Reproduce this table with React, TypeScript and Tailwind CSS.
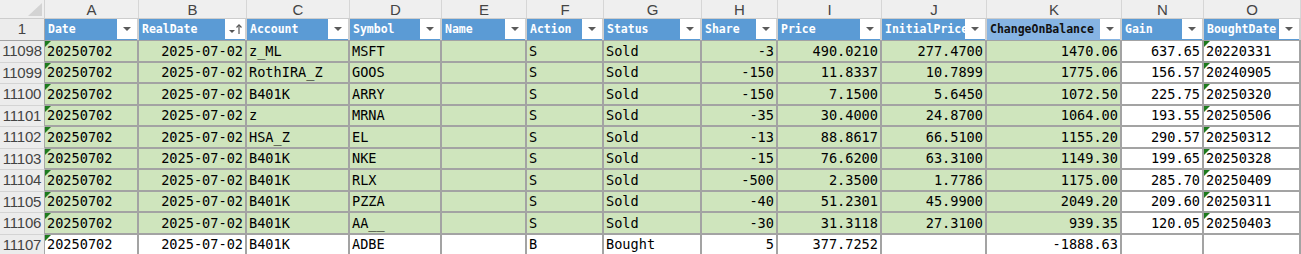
type Col = {
  letter: string
  w: string
  head: string
  align: 'left' | 'right'
  greenFill: boolean
  sorted?: boolean
  light?: boolean
}

const cols: Col[] = [
  { letter: 'A', w: 'w-[94px]', head: 'Date', align: 'left', greenFill: true },
  { letter: 'B', w: 'w-[108px]', head: 'RealDate', align: 'right', greenFill: true, sorted: true },
  { letter: 'C', w: 'w-[103px]', head: 'Account', align: 'left', greenFill: true },
  { letter: 'D', w: 'w-[92px]', head: 'Symbol', align: 'left', greenFill: true },
  { letter: 'E', w: 'w-[85px]', head: 'Name', align: 'left', greenFill: true },
  { letter: 'F', w: 'w-[77px]', head: 'Action', align: 'left', greenFill: true },
  { letter: 'G', w: 'w-[98px]', head: 'Status', align: 'left', greenFill: true },
  { letter: 'H', w: 'w-[76px]', head: 'Share', align: 'right', greenFill: true },
  { letter: 'I', w: 'w-[104px]', head: 'Price', align: 'right', greenFill: true },
  { letter: 'J', w: 'w-[105px]', head: 'InitialPrice', align: 'right', greenFill: true },
  { letter: 'K', w: 'w-[135px]', head: 'ChangeOnBalance', align: 'right', greenFill: true, light: true },
  { letter: 'N', w: 'w-[82px]', head: 'Gain', align: 'right', greenFill: false },
  { letter: 'O', w: 'w-[97px]', head: 'BoughtDate', align: 'left', greenFill: false },
]

const rows: { n: number; cells: string[]; sold: boolean }[] = [
  { n: 11098, sold: true, cells: ['20250702', '2025-07-02', 'z_ML', 'MSFT', '', 'S', 'Sold', '-3', '490.0210', '277.4700', '1470.06', '637.65', '20220331'] },
  { n: 11099, sold: true, cells: ['20250702', '2025-07-02', 'RothIRA_Z', 'GOOS', '', 'S', 'Sold', '-150', '11.8337', '10.7899', '1775.06', '156.57', '20240905'] },
  { n: 11100, sold: true, cells: ['20250702', '2025-07-02', 'B401K', 'ARRY', '', 'S', 'Sold', '-150', '7.1500', '5.6450', '1072.50', '225.75', '20250320'] },
  { n: 11101, sold: true, cells: ['20250702', '2025-07-02', 'z', 'MRNA', '', 'S', 'Sold', '-35', '30.4000', '24.8700', '1064.00', '193.55', '20250506'] },
  { n: 11102, sold: true, cells: ['20250702', '2025-07-02', 'HSA_Z', 'EL', '', 'S', 'Sold', '-13', '88.8617', '66.5100', '1155.20', '290.57', '20250312'] },
  { n: 11103, sold: true, cells: ['20250702', '2025-07-02', 'B401K', 'NKE', '', 'S', 'Sold', '-15', '76.6200', '63.3100', '1149.30', '199.65', '20250328'] },
  { n: 11104, sold: true, cells: ['20250702', '2025-07-02', 'B401K', 'RLX', '', 'S', 'Sold', '-500', '2.3500', '1.7786', '1175.00', '285.70', '20250409'] },
  { n: 11105, sold: true, cells: ['20250702', '2025-07-02', 'B401K', 'PZZA', '', 'S', 'Sold', '-40', '51.2301', '45.9900', '2049.20', '209.60', '20250311'] },
  { n: 11106, sold: true, cells: ['20250702', '2025-07-02', 'B401K', 'AA__', '', 'S', 'Sold', '-30', '31.3118', '27.3100', '939.35', '120.05', '20250403'] },
  { n: 11107, sold: false, cells: ['20250702', '2025-07-02', 'B401K', 'ADBE', '', 'B', 'Bought', '5', '377.7252', '', '-1888.63', '', ''] },
]

function FilterButton({ sorted }: { sorted?: boolean }) {
  return (
    <span className="absolute right-0 top-0 h-[20px] w-[20px] bg-white flex items-center justify-center">
      {sorted ? (
        <svg width="20" height="20" viewBox="0 0 20 20">
          <polygon points="4,11 10,11 7,14" fill="#555" />
          <line x1="14" y1="6" x2="14" y2="15" stroke="#555" strokeWidth="1.2" />
          <polyline points="11.5,8.5 14,5.8 16.5,8.5" fill="none" stroke="#555" strokeWidth="1.2" />
        </svg>
      ) : (
        <svg width="20" height="20" viewBox="0 0 20 20">
          <polygon points="6,8 14,8 10,12" fill="#5a5a5a" />
        </svg>
      )}
    </span>
  )
}

function ErrTri() {
  return (
    <svg className="absolute left-0 top-0" width="6" height="6" viewBox="0 0 6 6">
      <polygon points="0,0 6,0 0,6" fill="#1d7a1d" />
    </svg>
  )
}

export default function App() {
  return (
    <div className="w-[1301px] h-[254px] overflow-hidden bg-white select-none">
      {/* column letters */}
      <div className="flex h-[19px] bg-[#efefef] border-b border-[#cdcdcd] font-['Liberation_Sans',sans-serif] text-[15px] text-[#444]">
        <div className="w-[45px] relative border-r border-[#d2d2d2]">
          <svg className="absolute right-[2px] bottom-[2px]" width="14" height="13" viewBox="0 0 14 13">
            <polygon points="14,0 14,13 0,13" fill="#d3d3d3" />
          </svg>
        </div>
        {cols.map((c) => (
          <div key={c.letter} className={`${c.w} flex items-center justify-center border-r border-[#d6d6d6] leading-none`}>
            {c.letter}
          </div>
        ))}
      </div>

      {/* table header row */}
      <div className="flex h-[22px] border-b border-[#a3a3a3]">
        <div className="w-[45px] bg-[#ececec] border-r border-[#a8a8a8] flex items-center justify-center font-['Liberation_Sans',sans-serif] text-[15px] text-[#444]">
          1
        </div>
        {cols.map((c) => (
          <div
            key={c.letter}
            className={`${c.w} relative overflow-hidden whitespace-nowrap border-r-2 border-[#d0d0d0] flex items-center pl-[3px] font-['DejaVu_Sans_Mono',monospace] font-bold text-[11.5px] ${c.light ? 'bg-[#86b4e3] text-[#111]' : 'bg-[#5b9bd5] text-white'}`}
          >
            {c.head}
            <FilterButton sorted={c.sorted} />
          </div>
        ))}
      </div>

      {/* data rows */}
      {rows.map((r, i) => (
        <div key={r.n} className={`flex ${i % 2 === 0 ? 'h-[22px]' : 'h-[21px]'}`}>
          <div className="w-[45px] bg-[#ececec] border-r border-b border-r-[#a8a8a8] border-b-[#d4d4d4] flex items-center justify-center font-['Liberation_Sans',sans-serif] text-[15px] text-[#444] tracking-[-0.2px]">
            {r.n}
          </div>
          {cols.map((c, j) => {
            const v = r.cells[j]
            const green = r.sold && c.greenFill
            const tri = (j === 0 || j === 12) && v !== ''
            return (
              <div
                key={c.letter}
                className={`${c.w} relative overflow-hidden whitespace-nowrap border-r-2 border-b-2 border-[#a3a3a3] flex items-center px-[2px] font-['DejaVu_Sans_Mono',monospace] text-[13.6px] text-black ${c.align === 'right' ? 'justify-end' : 'justify-start'} ${green ? 'bg-[#cfe5bd]' : 'bg-white'}`}
              >
                {tri && <ErrTri />}
                {v}
              </div>
            )
          })}
        </div>
      ))}
    </div>
  )
}
